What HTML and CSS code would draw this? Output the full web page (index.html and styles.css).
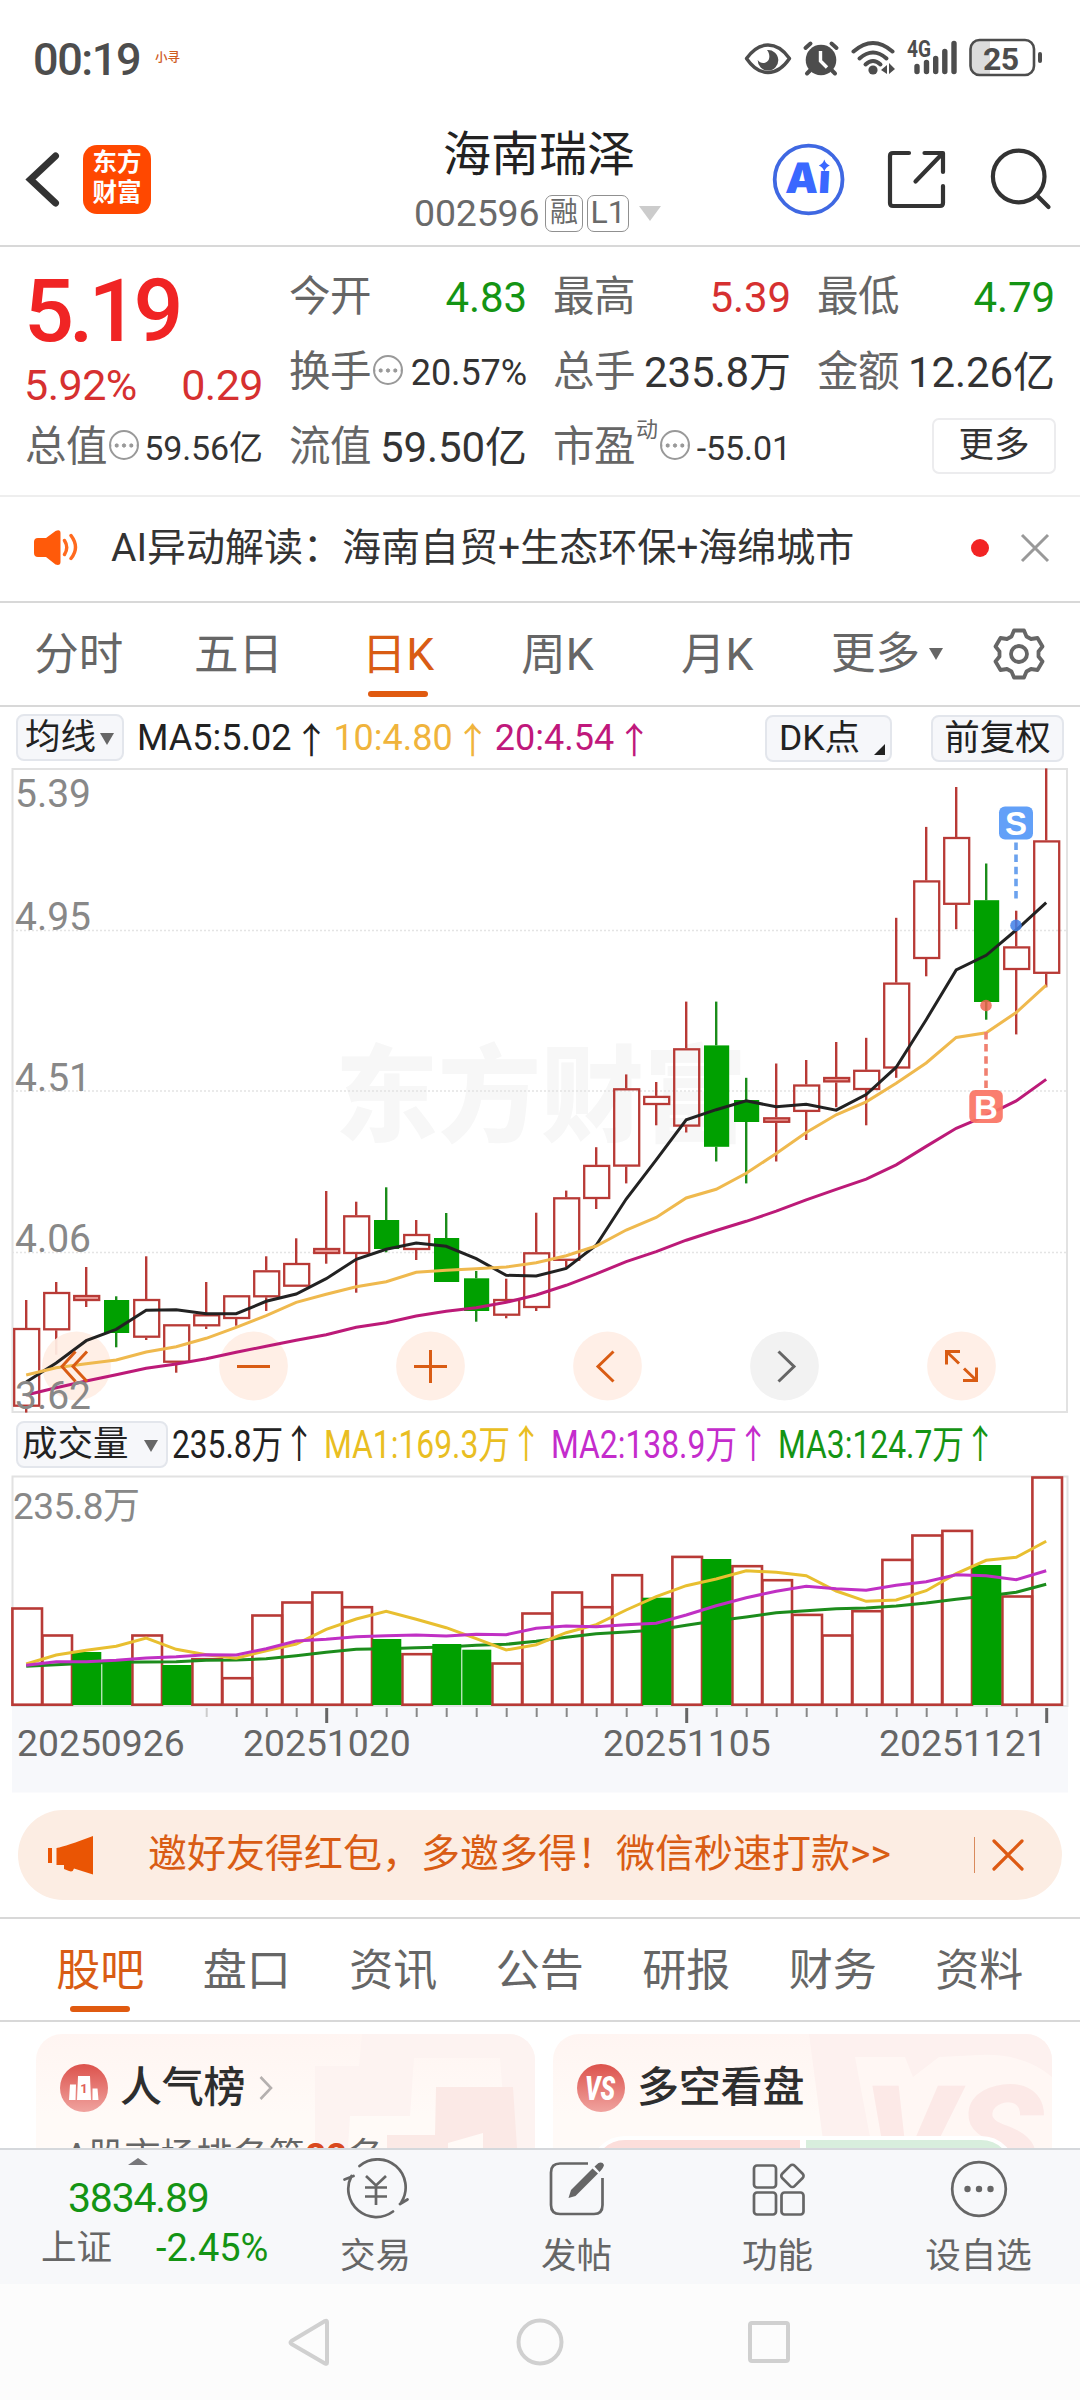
FILE: index.html
```html
<!DOCTYPE html>
<html lang="zh-CN">
<head>
<meta charset="utf-8">
<title>海南瑞泽 002596</title>
<link rel="stylesheet" href="styles.css">
</head>
<body>
<div class="screen">

  <div class="status">
    <span class="clock">00:19</span>
    <span class="app-note">小寻</span>
    <svg class="status-icons" width="310" height="50" viewBox="738 35 310 50">
      <g fill="none" stroke="#4d4d4d" stroke-width="3.4">
        <path d="M746.5 58.5Q756 45 768 45t21.500 13.500Q780 72.500 768 72.500t-21.500-14z" stroke-linejoin="round"/>
      </g>
      <path d="M767 50a10.300 10.300 0 1 1-9.300 10c3 5 10.500 3.500 11.500-2 .600-3.500-.700-6-2.200-8z" fill="#4d4d4d"/>
      <circle cx="821" cy="60" r="15.300" fill="#4d4d4d"/>
      <path d="M805.500 48l5-4.500M836.500 48l-5-4.500M810 70.500l-3 3M832 70.500l3 3" stroke="#4d4d4d" stroke-width="4" stroke-linecap="round"/>
      <path d="M820.500 51v10l6.500 6.500" stroke="#fff" stroke-width="3.400" fill="none"/>
      <g fill="none" stroke="#4d4d4d" stroke-width="4" stroke-linecap="round">
        <path d="M853.500 51.500Q873 34.500 892.500 51.500"/><path d="M859.500 58.500Q873 46.500 886.500 58.500"/><path d="M865.500 64.500Q873 57.500 880.500 64.500"/>
      </g>
      <circle cx="873" cy="70" r="4.600" fill="#4d4d4d"/>
      <path d="M881 70l6-5v9zM889 63v11l6-5z" fill="#4d4d4d"/>
      <text x="907" y="57" font-size="23" font-weight="700" fill="#4d4d4d" textLength="24" lengthAdjust="spacingAndGlyphs">4G</text>
      <path d="M917 66.500v5M926.500 62.500v9M935.700 58.500v13M944.800 51.500v20M954 43.500v28" stroke="#4d4d4d" stroke-width="5.400" stroke-linecap="round"/>
      <path d="M990 41h-11q-8 0-8 8v17q0 8 8 8h11z" fill="#dcdcdc"/>
      <rect x="970.500" y="40" width="63.500" height="35" rx="9" fill="none" stroke="#4d4d4d" stroke-width="2.600"/>
      <rect x="1038" y="52" width="4" height="11" rx="2" fill="#4d4d4d"/>
      <text x="983" y="69.500" font-size="32" font-weight="700" fill="#4d4d4d" textLength="36">25</text>
    </svg>
  </div>

  <div class="header">
    <svg class="back" width="36" height="60" viewBox="24 150 36 60"><path d="M55.500 156L30.500 179.500l25 23.500" fill="none" stroke="#333" stroke-width="7" stroke-linecap="round" stroke-linejoin="miter"/></svg>
    <div class="logo">东方<br>财富</div>
    <div class="title">
      <div class="name">海南瑞泽</div>
      <div class="code"><span class="digits">002596</span><span class="tag">融</span><span class="tag tag-level">L1</span><i class="drop"></i></div>
    </div>
    <svg class="tools" width="284" height="76" viewBox="771 142 284 76">
      <circle cx="808.600" cy="179.500" r="33.900" fill="#fff" stroke="#3f68e2" stroke-width="3.800"/>
      <g class="ai" fill="#3a68ff"><text transform="translate(785 193) skewX(-3)" textLength="45" lengthAdjust="spacingAndGlyphs">Ai</text></g>
      <rect x="816" y="157" width="16" height="14" fill="#fff"/>
      <path d="M824.300 159.500q1.500 4.500 5.500 6-4 1.500-5.500 6-1.500-4.500-5.500-6 4-1.500 5.500-6z" fill="#3a68ff"/>
      <g fill="none" stroke="#333" stroke-width="4.200" stroke-linecap="round" stroke-linejoin="round">
        <path d="M909 153h-16q-3 0-3 3v47q0 3 3 3h47q3 0 3-3v-17"/>
        <path d="M924.500 153h18.500v19M942 154l-26.500 27.500"/>
        <circle cx="1018.700" cy="176.500" r="25.800"/><path d="M1037 195.500l11.500 11.500"/>
      </g>
    </svg>
  </div>

  <div class="quote">
    <div class="col">
      <div class="price">5.19</div>
      <div class="change"><span>5.92%</span><span>0.29</span></div>
      <div class="item"><b>总值</b><i class="more-dot"></i><em class="small">59.56亿</em></div>
    </div>
    <div class="col">
      <div class="item"><b>今开</b><em class="down">4.83</em></div>
      <div class="item"><b>换手</b><i class="more-dot"></i><em class="mid">20.57%</em></div>
      <div class="item"><b>流值</b><em>59.50亿</em></div>
    </div>
    <div class="col">
      <div class="item"><b>最高</b><em class="up">5.39</em></div>
      <div class="item"><b>总手</b><em>235.8万</em></div>
      <div class="item"><b>市盈</b><sup>动</sup><i class="more-dot"></i><em class="small">-55.01</em></div>
    </div>
    <div class="col">
      <div class="item"><b>最低</b><em class="down">4.79</em></div>
      <div class="item"><b>金额</b><em>12.26亿</em></div>
      <div class="item item-end"><span class="more-btn">更多</span></div>
    </div>
  </div>

  <div class="notice">
    <svg width="46" height="38" viewBox="33 530 46 38"><path d="M38 539h8l9.500-7q5-2 5 2v29q0 4-5 2.500L46 558h-8q-4 0-4-4v-11q0-4 4-4z" fill="#ff5a0a"/><path d="M64.500 541.500q4.500 7 0 14M71 536.500q9 12 0 23" fill="none" stroke="#ff6a1e" stroke-width="3.400" stroke-linecap="round"/></svg>
    <span class="notice-text">AI异动解读：海南自贸+生态环保+海绵城市</span>
    <i class="dot"></i>
    <svg width="30" height="30" viewBox="0 0 30 30"><path d="M2 2l26 26M28 2L2 28" stroke="#999" stroke-width="3"/></svg>
  </div>

  <div class="periods">
    <span>分时</span><span>五日</span><span class="on">日K</span><span>周K</span><span>月K</span>
    <div class="period-more">更多<i class="caret"></i></div>
    <svg class="gear" width="54" height="54" viewBox="-27 -27 54 54" fill="none" stroke="#666" stroke-width="3.800" stroke-linejoin="round"><path d="M-5-23.500H5L7.500-17.500 12-15 18.500-16 23.500-7.500 19.500-2.500V2.500L23.500 7.500 18.500 16 12 15 7.500 17.500 5 23.500H-5L-7.500 17.500-12 15-18.500 16-23.500 7.500-19.500 2.500V-2.500L-23.500-7.500-18.500-16-12-15-7.500-17.500Z"/><circle r="8"/></svg>
  </div>

  <div class="ma-row">
    <span class="chip chip-ma">均线<i class="caret"></i></span>
    <span class="ma">MA5:5.02<u>↑</u></span><span class="ma ma10">10:4.80<u>↑</u></span><span class="ma ma20">20:4.54<u>↑</u></span>
    <span class="chip chip-dk">DK点<i class="corner"></i></span>
    <span class="chip chip-adj">前复权</span>
  </div>

  <svg class="kline" id="kline" width="1080" height="646" viewBox="0 768 1080 646">
    <text class="watermark" x="335" y="1133" textLength="412" lengthAdjust="spacingAndGlyphs">东方财富</text>
    <path d="M12 930.500H1067M12 1091H1067M12 1252.500H1067" stroke="#e4e4e4" stroke-width="1.500" stroke-dasharray="2 2"/>
    <path d="M12.500 769H1067V1412H12.500z" fill="none" stroke="#e2e2e2" stroke-width="2"/>
    <g id="candles"></g>
    <g fill="#ffeee5" opacity=".93">
      <circle cx="76.500" cy="1366" r="34.400"/><circle cx="253.500" cy="1366" r="34.400"/><circle cx="430.500" cy="1366" r="34.400"/><circle cx="607.500" cy="1366" r="34.400"/><circle cx="961.500" cy="1366" r="34.400"/>
    </g>
    <circle cx="784.500" cy="1366" r="34.400" fill="#f2f2f2"/>
    <g id="overlay"></g>
    <g fill="none" stroke="#d95c14" stroke-width="3">
      <path d="M75.500 1351.500L62 1366.500l13.500 15M87 1351.500l-14 15 14 15"/>
      <path d="M237 1366.500h33M414 1366.500h33M430.500 1350v33"/>
      <path d="M613.500 1351.500l-15.500 15 15.500 15"/>
      <path d="M960 1351.500h-13.500v13M946.500 1351.500l12.500 12M963 1380.500h13.500v-13M976.500 1380.500l-12.500-12"/>
    </g>
    <path d="M778.500 1351.500l15.500 15-15.500 15" fill="none" stroke="#666" stroke-width="3"/>
    <g class="axis-text">
      <text x="15" y="807">5.39</text><text x="15" y="930">4.95</text><text x="15" y="1090.500">4.51</text><text x="15" y="1252">4.06</text><text x="15" y="1408.500">3.62</text>
    </g>
    <path d="M1016 842.500v56" stroke="#6ba2ee" stroke-width="3.600" stroke-dasharray="7.500 4.600"/>
    <circle cx="1016" cy="925.400" r="5.800" fill="#3f7fe8" opacity=".85"/>
    <rect x="999" y="806.500" width="34" height="33" rx="6" fill="#62a0f8"/>
    <text class="badge-text" x="1016" y="835">S</text>
    <path d="M986 1032v56" stroke="#f08070" stroke-width="3.600" stroke-dasharray="7.500 4.600"/>
    <circle cx="986" cy="1005.500" r="5.800" fill="#ee6450" opacity=".85"/>
    <rect x="969.300" y="1090" width="33.500" height="33" rx="6" fill="#fa7464" opacity=".93"/>
    <text class="badge-text" x="986" y="1118.500">B</text>
  </svg>

  <div class="vol-head">
    <span class="chip chip-vol">成交量<i class="caret"></i></span>
    <svg width="830" height="50" viewBox="170 1420 830 50" font-size="39">
      <text fill="#222" x="172" y="1458" textLength="143" lengthAdjust="spacingAndGlyphs">235.8万<tspan class="arrow">↑</tspan></text>
      <text fill="#e9be22" x="324" y="1458" textLength="218" lengthAdjust="spacingAndGlyphs">MA1:169.3万<tspan class="arrow">↑</tspan></text>
      <text fill="#c42ccc" x="551" y="1458" textLength="218" lengthAdjust="spacingAndGlyphs">MA2:138.9万<tspan class="arrow">↑</tspan></text>
      <text fill="#149414" x="778" y="1458" textLength="218" lengthAdjust="spacingAndGlyphs">MA3:124.7万<tspan class="arrow">↑</tspan></text>
    </svg>
  </div>

  <svg class="volume" width="1080" height="318" viewBox="0 1475 1080 318">
    <rect x="12" y="1707" width="1056" height="85.500" fill="#f7f8fb"/>
    <path d="M12.500 1706V1476.500H1067.500V1706z" fill="none" stroke="#e2e2e2" stroke-width="2"/>
    <g id="bars"></g>
    <text class="axis-text vol-max" x="13" y="1519" textLength="127">235.8万</text>
    <g class="dates"><text x="17" y="1756">20250926</text><text x="243" y="1756">20251020</text><text x="603" y="1756">20251105</text><text x="879" y="1756">20251121</text></g>
  </svg>

  <div class="banner">
    <svg width="46" height="40" viewBox="47 1834 46 40"><path d="M48 1847h4v15h-4zM56.500 1847q10-2 36.500-12v38.500l-19-6q-1 4-5 2.500l-5-2v-4h-7.500z" fill="#ea5504"/></svg>
    <span class="banner-text">邀好友得红包，多邀多得！微信秒速打款&gt;&gt;</span>
    <i class="bar"></i>
    <svg width="32" height="32" viewBox="0 0 32 32"><path d="M2 2l28 28M30 2L2 30" stroke="#dd5a14" stroke-width="3.200" stroke-linecap="round"/></svg>
  </div>

  <div class="sections">
    <span class="on">股吧</span><span>盘口</span><span>资讯</span><span>公告</span><span>研报</span><span>财务</span><span>资料</span>
  </div>

  <div class="cards">
    <div class="card">
      <svg class="deco" width="499" height="114" viewBox="36 2034 499 114"><path d="M362 2034h173v114h-28l-7-90H414l-4 58h-60l-2 32h-33v-82h44z" fill="#fdf3f1"/><path d="M436 2087h77l4 61h-34v-15l-35 10v5h-61v-13h48z" fill="#fbe9e6"/></svg>
      <div class="card-head">
        <svg width="48" height="48" viewBox="0 0 48 48"><defs><linearGradient id="red" x2="0" y2="1"><stop stop-color="#dc524c"/><stop offset="1" stop-color="#f0a39f"/></linearGradient></defs><circle cx="24" cy="24" r="24" fill="url(#red)"/><path d="M10 20.500h6l-.500 15.500H9zM18 12h12l1 24H17zM32.500 24.500h5l1 11.500h-6z" fill="#fff"/><text class="rank-one" x="24" y="28.500">1</text></svg>
        <h3>人气榜</h3>
        <svg class="chev" width="14" height="24" viewBox="0 0 14 24"><path d="M1.500 1l10.500 11L1.500 23" fill="none" stroke="#b5b0af" stroke-width="2.600"/></svg>
      </div>
      <p>A股市场排名第<strong>22</strong>名</p>
    </div>
    <div class="card card-vs">
      <svg class="deco" width="499" height="114" viewBox="553 2034 499 114"><path d="M809 2034h243v114H824z" fill="#fdf1ef"/><path d="M855 2057h50l8 20 26-20 40-2q45-2 73 22v71H872z" fill="#fff7f4"/><g class="deco-vs"><text x="863" y="2186" textLength="180" lengthAdjust="spacingAndGlyphs">VS</text></g></svg>
      <div class="card-head">
        <svg width="48" height="48" viewBox="0 0 48 48"><circle cx="24" cy="24" r="24" fill="url(#red)"/><text class="vs-text" x="8" y="36" textLength="30" lengthAdjust="spacingAndGlyphs">VS</text></svg>
        <h3>多空看盘</h3>
      </div>
      <div class="versus"><i></i><i></i></div>
    </div>
  </div>

  <div class="dock">
    <div class="index">
      <i class="tri"></i>
      <div class="index-value">3834.89</div>
      <div class="index-row"><span>上证</span><em>-2.45%</em></div>
    </div>
    <div class="dock-item">
      <svg width="70" height="62" viewBox="-35 -31 70 62" fill="none" stroke="#666" stroke-width="2.700"><path d="M-16.500-23A28 28 0 0 1 25.500 13M17 22.500A28 28 0 0 1-24.500-13M-31.500-9.500l9-3.500M24 15l7.500-4.500" stroke-linecap="round"/><path d="M-10-13L0-3.500 10-13M-11-1.500H11M-11 7.500H11M0-3.500V16"/></svg>
      <span>交易</span>
    </div>
    <div class="dock-item">
      <svg width="70" height="62" viewBox="-35 -31 70 62" fill="none" stroke="#666" stroke-width="2.700"><path d="M11-25.500H-17q-9 0-9 9V16q0 9 9 9H17q8.500 0 8.500-9V-11"/><path d="M-8.500 9l2.500-8L15.500-20.500l5.500 5L-1.500 7zM17.500-22.500l4-3.500q4-1.500 5.500 2-.500 3-4.500 7z" fill="#666" stroke="none"/></svg>
      <span>发帖</span>
    </div>
    <div class="dock-item">
      <svg width="70" height="62" viewBox="-35 -31 70 62" fill="none" stroke="#666" stroke-width="2.700"><rect x="-24" y="-23.500" width="22" height="22" rx="3"/><rect x="-24" y="3.500" width="22" height="22" rx="3"/><rect x="3.500" y="3.500" width="22" height="22" rx="3"/><rect x="5.500" y="-22" width="17.500" height="17.500" rx="3" transform="rotate(45 14.200 -13)"/></svg>
      <span>功能</span>
    </div>
    <div class="dock-item">
      <svg width="70" height="62" viewBox="-35 -31 70 62" fill="none" stroke="#666" stroke-width="2.700"><circle r="26.800"/><g fill="#666" stroke="none"><circle cx="-11.500" r="3.200"/><circle r="3.200"/><circle cx="11.500" r="3.200"/></g></svg>
      <span>设自选</span>
    </div>
  </div>

  <div class="nav">
    <svg width="506" height="50" viewBox="287 2317 506 50" fill="none" stroke="#d0d0d0" stroke-width="4" stroke-linejoin="round"><path d="M327 2322v40.500q0 2-2 1L291.500 2344q-2-1.500 0-3l33.500-20q2-1 2 1z"/><circle cx="540" cy="2342" r="21.500"/><rect x="750" y="2323" width="38" height="38" rx="2"/></svg>
  </div>
</div>
<script src="chart.js"></script>
</body>
</html>
```
FILE: styles.css
```css
* { box-sizing: border-box; }
body { margin: 0; background: #fff; font-family: Roboto, "Noto Sans CJK SC", sans-serif; color: #333; }
i, em, u, b { font-style: normal; font-weight: 400; text-decoration: none; }
svg { display: block; flex: none; }
text { font-family: Roboto, "Noto Sans CJK SC", sans-serif; }
.screen { width: 1080px; height: 2400px; overflow: hidden; display: flex; flex-direction: column; }
.screen > * { flex: none; }

.status { height: 117px; padding: 35px 32px 0 33px; display: flex; }
.clock { font-size: 45px; font-weight: 500; line-height: 49px; color: #4d4d4d; letter-spacing: -1.400px; width: 122px; }
.app-note { font-size: 12.500px; font-weight: 500; line-height: 46px; color: #cf5c1e; }
.status-icons { margin-left: auto; }

.header { height: 130px; border-bottom: 2px solid #d8d8d8; display: flex; align-items: flex-start; padding: 0 25px 0 24px; }
.back { margin-top: 33px; }
.logo { margin: 28px 0 0 23px; width: 68px; height: 69px; border-radius: 14px; background: #ff4800; color: #fff; font-size: 24.500px; font-weight: 700; line-height: 29.500px; text-align: center; padding-top: 3px; white-space: nowrap; }
.title { width: 250px; margin-left: 263px; }
.name { font-size: 48px; line-height: 56px; margin-top: 10px; padding-left: 29px; color: #222; white-space: nowrap; }
.code { display: flex; align-items: center; height: 38px; margin-top: 11px; color: #6a6a6a; }
.digits { font-size: 37.500px; width: 131px; letter-spacing: -0.200px; }
.tag { width: 38px; height: 37px; border: 1.500px solid #909090; border-radius: 7px; font-size: 28px; line-height: 33px; text-align: center; margin-right: 4px; }
.tag-level { width: 42px; font-size: 32px; margin-right: 10px; }
.drop { border: 11px solid transparent; border-top: 15px solid #ccc; border-bottom: 0; }
.tools { margin: 25px 0 0 auto; }
.ai text { font-family: Inter, sans-serif; font-size: 42px; font-weight: 900; }

.quote { height: 250px; border-bottom: 2px solid #eee; display: grid; grid-template-columns: repeat(4, 238px); column-gap: 26px; padding: 13px 0 0 25px; }
.price { font-size: 88px; font-weight: 500; line-height: 102px; height: 100px; color: #f02424; letter-spacing: -5px; margin-left: -1px; }
.change { height: 50px; display: flex; justify-content: space-between; font-size: 43px; line-height: 50px; color: #d63030; letter-spacing: -0.500px; margin-left: -1px; }
.item { height: 75px; display: flex; align-items: center; font-size: 41.500px; line-height: 50px; white-space: nowrap; }
.item b { color: #666; letter-spacing: -0.500px; margin-top: -1px; }
.item em { margin-left: auto; font-size: 42px; letter-spacing: -0.100px; }
.item .down { color: #149414; }
.item .up { color: #d63030; }
.item .small { font-size: 34px; padding-top: 1px; }
.item .mid { font-size: 36px; }
.item sup { font-size: 22px; line-height: 22px; color: #666; align-self: flex-start; margin: 9px 0 0 1px; }
.more-dot { width: 30px; height: 30px; margin: -5px 0 0 2px; border: 2.500px solid #999; border-radius: 50%; background: radial-gradient(circle, #999 1.800px, transparent 2.400px) center / 7.300px 25px repeat-x; }
.item-end { justify-content: flex-end; }
.more-btn { width: 124px; height: 56px; margin: -4px -1px 0 0; border: 2px solid #ececee; border-radius: 7px; font-size: 35.500px; line-height: 51px; text-align: center; }

.notice { height: 106px; border-bottom: 2px solid #d8d8d8; display: flex; align-items: center; padding: 0 30px 3px 33px; }
.notice-text { font-size: 39px; line-height: 50px; margin-left: 32px; white-space: nowrap; }
.dot { width: 18px; height: 18px; border-radius: 50%; background: #f22424; margin: 0 31px 0 auto; }

.periods { height: 104px; border-bottom: 2px solid #d8d8d8; display: flex; font-size: 44.500px; line-height: 105px; color: #666; }
.periods span { width: 159.600px; text-align: center; position: relative; left: -1px; }
.periods .on, .sections .on { color: #d95c14; }
.periods .on::after, .sections .on::after { content: ""; position: absolute; left: 50%; margin-left: -30px; bottom: 8px; width: 60px; height: 6px; border-radius: 3px; background: #e05a10; }
.period-more { display: flex; align-items: center; width: 116px; margin-left: 33px; }
.caret { display: inline-block; border: 7.500px solid transparent; border-top: 12px solid #666; border-bottom: 0; }
.period-more .caret { margin-left: 9px; }
.gear { margin: 24px 0 0 45px; }

.ma-row { height: 61px; padding: 7px 16px 0; display: flex; }
.chip { height: 47px; background: #f6f7fa; border: 2px solid #e3e6ec; border-radius: 8px; font-size: 35.500px; line-height: 43px; color: #222; white-space: nowrap; }
.chip-ma { width: 108px; padding-left: 7px; margin-right: 13px; }
.chip-ma .caret { margin: 0 0 4px 4px; }
.ma { font-size: 36px; line-height: 48px; color: #222; white-space: nowrap; display: flex; }
.ma u, .arrow { font-family: "Noto Sans CJK SC", sans-serif; }
.ma u { width: 42px; padding-left: 2px; }
.ma10 { color: #f0b43c; }
.ma20 { color: #c0187c; }
.chip-dk { position: relative; width: 127px; padding-left: 12px; margin: 1px 39px 0 auto; }
.corner { position: absolute; right: 5px; bottom: 5px; border-left: 11px solid transparent; border-bottom: 11px solid #222; }
.chip-adj { width: 133px; margin-top: 1px; text-align: center; }

.kline { height: 646px; overflow: visible; }
.watermark { font-size: 105px; font-weight: 900; fill: #f7f7f7; }
.axis-text { font-size: 39px; fill: #888; }
.vol-max { font-size: 37px; }
.dates { font-size: 37.300px; fill: #666; }
.badge-text { font-family: "Liberation Sans", sans-serif; font-size: 33px; font-weight: 700; fill: #fff; text-anchor: middle; }

.vol-head { height: 61px; padding: 7px 0 0 16px; display: flex; }
.chip-vol { width: 152px; padding-left: 4px; margin-right: 2px; }
.chip-vol .caret { margin: 0 0 4px 15px; }
.vol-head svg { margin-top: -1px; overflow: visible; }

.banner { height: 90px; margin: 17px 18px; border-radius: 45px; background: #fcede3; display: flex; align-items: center; padding: 0 38px 0 29px; color: #d95c14; }
.banner-text { font-size: 39px; line-height: 50px; margin-left: 55px; white-space: nowrap; padding-bottom: 3px; }
.bar { width: 1.500px; height: 36px; background: #d98a5c; margin: 0 17px 0 auto; }

.sections { height: 105px; border-top: 2px solid #d8d8d8; border-bottom: 2px solid #d8d8d8; display: flex; padding-left: 27px; font-size: 44px; line-height: 104px; color: #666; }
.sections span { width: 146.500px; text-align: center; position: relative; }

.cards { height: 126px; padding: 12px 28px 0 36px; display: flex; gap: 18px; overflow: hidden; }
.card { position: relative; width: 499px; height: 180px; border-radius: 26px; background: linear-gradient(#fff5f2, #fffaf7 80px); padding: 30px 24px; overflow: hidden; }
.deco { position: absolute; left: 0; top: 0; }
.card-head { position: relative; display: flex; align-items: center; height: 48px; }
.card h3 { margin: 0 0 0 12px; font-size: 42px; font-weight: 500; line-height: 48px; color: #2e2e2e; letter-spacing: -0.200px; }
.chev { margin-left: 14px; }
.card p { position: relative; margin: 19px 0 0 5px; font-size: 36px; line-height: 52px; color: #666; white-space: nowrap; }
.card strong { color: #d9481e; font-weight: 700; margin: 0 1px; }
.rank-one { font-size: 13px; font-weight: 700; fill: #e0605a; text-anchor: middle; }
.vs-text { font-size: 34px; font-weight: 900; font-style: italic; fill: #fff; }
.deco-vs { font-size: 140px; font-weight: 900; font-style: italic; fill: #fce9e7; }
.versus { position: absolute; left: 37px; top: 102px; width: 426px; height: 70px; border: 4px solid #fff; border-radius: 35px; background: #fff; display: flex; gap: 6px; overflow: hidden; }
.versus i { flex: 1; background: #d8eedd; }
.versus i:first-child { background: #fcdedb; }

.dock { height: 136px; background: #f7f8fa; border-top: 2px solid #d5d8dc; display: flex; }
.index { width: 275px; padding: 8px 0 0 41px; color: #149414; }
.tri { display: block; margin-left: 87px; width: 0; border: 10.500px solid transparent; border-bottom: 7px solid #77777a; border-top: 0; }
.index-value { font-size: 41px; line-height: 48px; margin: 9px 0 0 27px; letter-spacing: -1.200px; }
.index-row { display: flex; align-items: center; height: 44px; line-height: 44px; margin-top: 4px; }
.index-row span { font-size: 35.500px; color: #666; width: 115px; }
.index-row em { font-size: 38px; }
.dock-item { width: 201px; display: flex; flex-direction: column; align-items: center; padding-top: 8px; color: #666; font-size: 35.500px; line-height: 44px; }
.dock-item svg { margin-bottom: 14px; }
.nav { height: 116px; background: #fcfcfc; padding: 33px 0 0 287px; }
```
FILE: chart.js
```js
// Candles: [rising, high, body top, body bottom, low]
const candles = [
  [1,1300,1328,1406.7,1412.6],[1,1282,1292,1330.3,1354.7],[1,1267,1295,1301,1307],[0,1296.3,1300,1333,1347.3],
  [1,1256.3,1299,1337.7,1340],[1,1324.3,1324.3,1362.7,1372.7],[1,1282,1314.3,1326.3,1329],[1,1295.3,1295.3,1319,1325.7],
  [1,1256.3,1270.3,1297.3,1311],[1,1238.3,1263,1286.7,1286.7],[1,1191,1248,1254,1263.7],[1,1201.7,1215.3,1254,1292.7],
  [0,1187.3,1220,1249,1252.3],[1,1220,1234,1250,1260],[0,1213,1238,1282,1282],[0,1271,1278.3,1311,1321.7],
  [1,1278.7,1299,1315.7,1318.3],[1,1212.7,1252.3,1308,1311],[1,1190.6,1197.3,1260.8,1267],[1,1147.2,1164.9,1199,1209],
  [1,1074.4,1088.3,1166.6,1183.4],[1,1082,1095.9,1105,1125.3],[1,1001.6,1048.3,1126.6,1132.5],[0,1001.6,1045.4,1146.8,1161.5],
  [0,1077.8,1100,1122,1183.4],[1,1063.5,1117.3,1122.8,1161.5],[1,1060,1084.5,1111.9,1140],[1,1042,1077,1082.4,1107.2],
  [1,1037.8,1069.8,1090,1125.3],[1,917.8,982.6,1068.5,1077.8],[1,826.9,880.4,959,976.3],[1,787,837,904.8,929.2],
  [0,863.5,900.2,1002,1019.7],[1,910.7,946.4,970,1034.4],[1,768.4,840.4,973.8,987.3]
];
const ma5 = [1382,1363,1340.7,1329.3,1310.3,1309.7,1313.7,1313.7,1301.3,1294,1278.7,1259.3,1249.3,1243,1246.3,1258.7,1275.3,1276,1268.4,1245.3,1199,1159.8,1119.8,1109.7,1100.9,1106.8,1104.3,1110.2,1094.6,1067.2,1019.7,970,955.3,930,902.7];
const ma10 = [1375,1367.7,1363.7,1360,1352,1346.7,1338.3,1327.3,1315.7,1302.3,1294.3,1286.7,1281.7,1272.3,1270.3,1268.7,1267,1262.7,1255.8,1246,1230,1217.5,1198,1189.3,1173.3,1153.5,1132.5,1114.8,1101.8,1083.2,1063,1037.4,1032.7,1012.5,985.2];
const ma20 = [1395,1387.7,1381,1374.7,1368.3,1364,1358.7,1352.3,1346.3,1340.3,1334.7,1327.3,1322.7,1316,1311.3,1307.7,1302.3,1295,1285.3,1273.9,1261.7,1251.6,1240.2,1230.5,1221.3,1211.2,1199.8,1189.3,1179.2,1164.9,1146.4,1128.3,1115.6,1100.9,1079.4];

const volumeTop = [1607.3,1634.3,1652,1659.7,1634.3,1665,1658,1677,1614.3,1601.3,1591.3,1606,1639,1653,1644,1649.7,1662.3,1612.3,1591.3,1606,1574,1597.7,1555.7,1559,1565,1579,1613.7,1634.3,1610,1558.7,1534.3,1529.7,1565,1595.3,1476.3];
const volumeFalling = new Set([2, 3, 5, 12, 14, 15, 21, 23, 32]);
const vol1 = [1664,1655,1650.3,1646.3,1638,1649.3,1654.7,1658.3,1650.7,1644,1629.3,1619,1611.3,1619.3,1627.7,1638.7,1650,1644.7,1632.7,1624.7,1610,1596.7,1585.7,1579,1570.7,1572.3,1575.7,1591,1601.3,1600,1590.7,1573.7,1560.3,1557.3,1541.3];
const vol2 = [1665.3,1661.7,1661.7,1660.3,1658,1656.7,1654.7,1655,1648.7,1641,1639.3,1636.7,1635.7,1635,1636,1634.3,1634.7,1628.3,1626,1626.7,1624.7,1623.3,1615,1605.7,1597.7,1591.3,1586.3,1588.7,1590.3,1585.3,1581.7,1574.7,1575.7,1579.7,1570.7];
const vol3 = [1666.3,1664.7,1663.3,1662.3,1662,1661.7,1660.3,1660,1658.7,1655.7,1652.3,1649.3,1648.7,1647.7,1647,1645.3,1644.3,1641.3,1637.3,1633.7,1632,1630,1625.3,1620.7,1617,1612.7,1610.7,1608.7,1608,1606,1603,1599.3,1596,1592.3,1584.3];

const RED = '#b83a36', GREEN = '#00a000';
const cx = i => 26.2 + 30 * i;
const line = (ys, color, w) =>
  `<polyline points="${ys.map((y, i) => cx(i) + ',' + y).join(' ')}" fill="none" stroke="${color}" stroke-width="${w}"/>`;
const vline = (x, a, b, color, w = 2.4) => `<path d="M${x} ${a}V${b}" stroke="${color}" stroke-width="${w}"/>`;

document.getElementById('candles').innerHTML = candles.map(([up, hi, top, bottom, lo], i) => {
  const x = cx(i), color = up ? RED : '#1a8c1a';
  const body = up
    ? `<rect x="${x - 12}" y="${top + 1}" width="25" height="${Math.max(bottom - top - 2, 2)}" fill="${bottom - top < 7 ? '#f0a8a4' : 'none'}" stroke="${RED}" stroke-width="2.3"/>`
    : `<rect x="${x - 12.2}" y="${top}" width="25.2" height="${bottom - top}" fill="${GREEN}"/>`;
  return vline(x, hi, top, color) + vline(x, bottom, lo, color) + body;
}).join('');

document.getElementById('overlay').innerHTML = line(ma5, '#222', 3) + line(ma10, '#efb94e', 3) + line(ma20, '#bc1a78', 3);

const rising = [], falling = [], ticks = [];
volumeTop.forEach((top, i) => {
  const x = 12 + 30 * i;
  if (volumeFalling.has(i)) falling.push(`<rect x="${x + .3}" y="${top}" width="29" height="${1705 - top}" fill="${GREEN}"/>`);
  else rising.push(`<rect x="${x + .4}" y="${top + 1.2}" width="29.6" height="${1703.5 - top}" fill="none" stroke="${RED}" stroke-width="2.6"/>`);
  if (i > 5) {
    const major = i % 12 === 10;
    ticks.push(vline(cx(i) + .5, 1708, major ? 1723 : 1717, i === 6 ? '#ccc' : major ? '#666' : '#888', major ? 3 : 2));
  }
});
document.getElementById('bars').innerHTML =
  rising.join('') + line(vol3, '#1c8c1c', 3) + falling.join('') +
  line(vol1, '#e8bf30', 3) + line(vol2, '#c030c4', 3) + ticks.join('');
```
